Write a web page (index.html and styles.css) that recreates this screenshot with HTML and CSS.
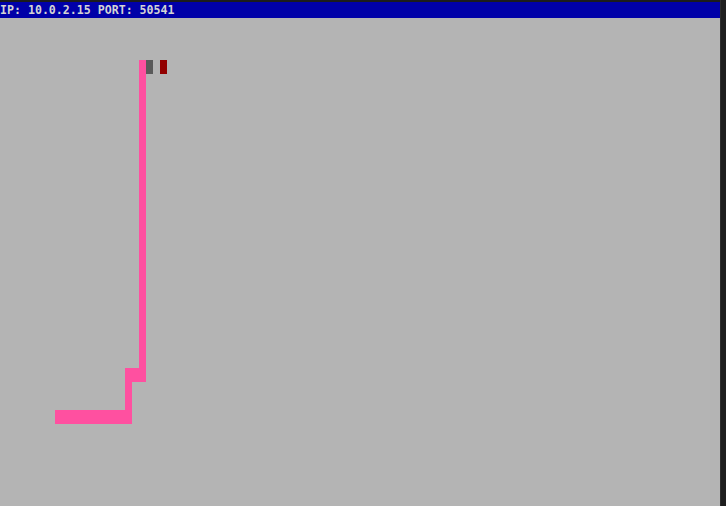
FILE: index.html
```html
<!DOCTYPE html>
<html>
<head>
<meta charset="utf-8">
<link rel="stylesheet" href="styles.css">
</head>
<body>
<div class="window">
  <div class="screen">
    <div class="topline"></div>
    <div class="status">IP: 10.0.2.15 PORT: 50541</div>
    <div class="field">
      <svg class="board" width="720" height="488" viewBox="0 18 720 488">
        <rect class="snake" x="139" y="60" width="7" height="322"/>
        <rect class="snake" x="125" y="368" width="21" height="14"/>
        <rect class="snake" x="125" y="368" width="7" height="56"/>
        <rect class="snake" x="55" y="410" width="77" height="14"/>
        <rect class="head" x="146" y="60" width="7" height="14"/>
        <rect class="food" x="160" y="60" width="7" height="14"/>
      </svg>
    </div>
  </div>
  <div class="edge"></div>
</div>
</body>
</html>
```
FILE: styles.css
```css
html, body {
  margin: 0;
  padding: 0;
  width: 726px;
  height: 506px;
  overflow: hidden;
  background: #b4b4b4;
}
.window {
  display: flex;
  width: 726px;
  height: 506px;
}
.screen {
  width: 720px;
  display: flex;
  flex-direction: column;
}
.topline {
  height: 2px;
  background: #1c1c1c;
}
.status {
  height: 16px;
  background: #0000a8;
  color: #d4d4d4;
  font-family: "DejaVu Sans Mono", monospace;
  font-weight: bold;
  font-size: 11.6px;
  line-height: 16px;
  white-space: pre;
  padding-left: 0;
}
.field {
  flex: 1;
  background: #b4b4b4;
}
.board {
  display: block;
}
.snake { fill: #ff50a0; }
.head { fill: #5a5a5a; }
.food { fill: #920000; }
.edge {
  width: 6px;
  background: #1e1e1e;
  border-left: 1px solid #2c2c2c;
  box-sizing: border-box;
}
```
